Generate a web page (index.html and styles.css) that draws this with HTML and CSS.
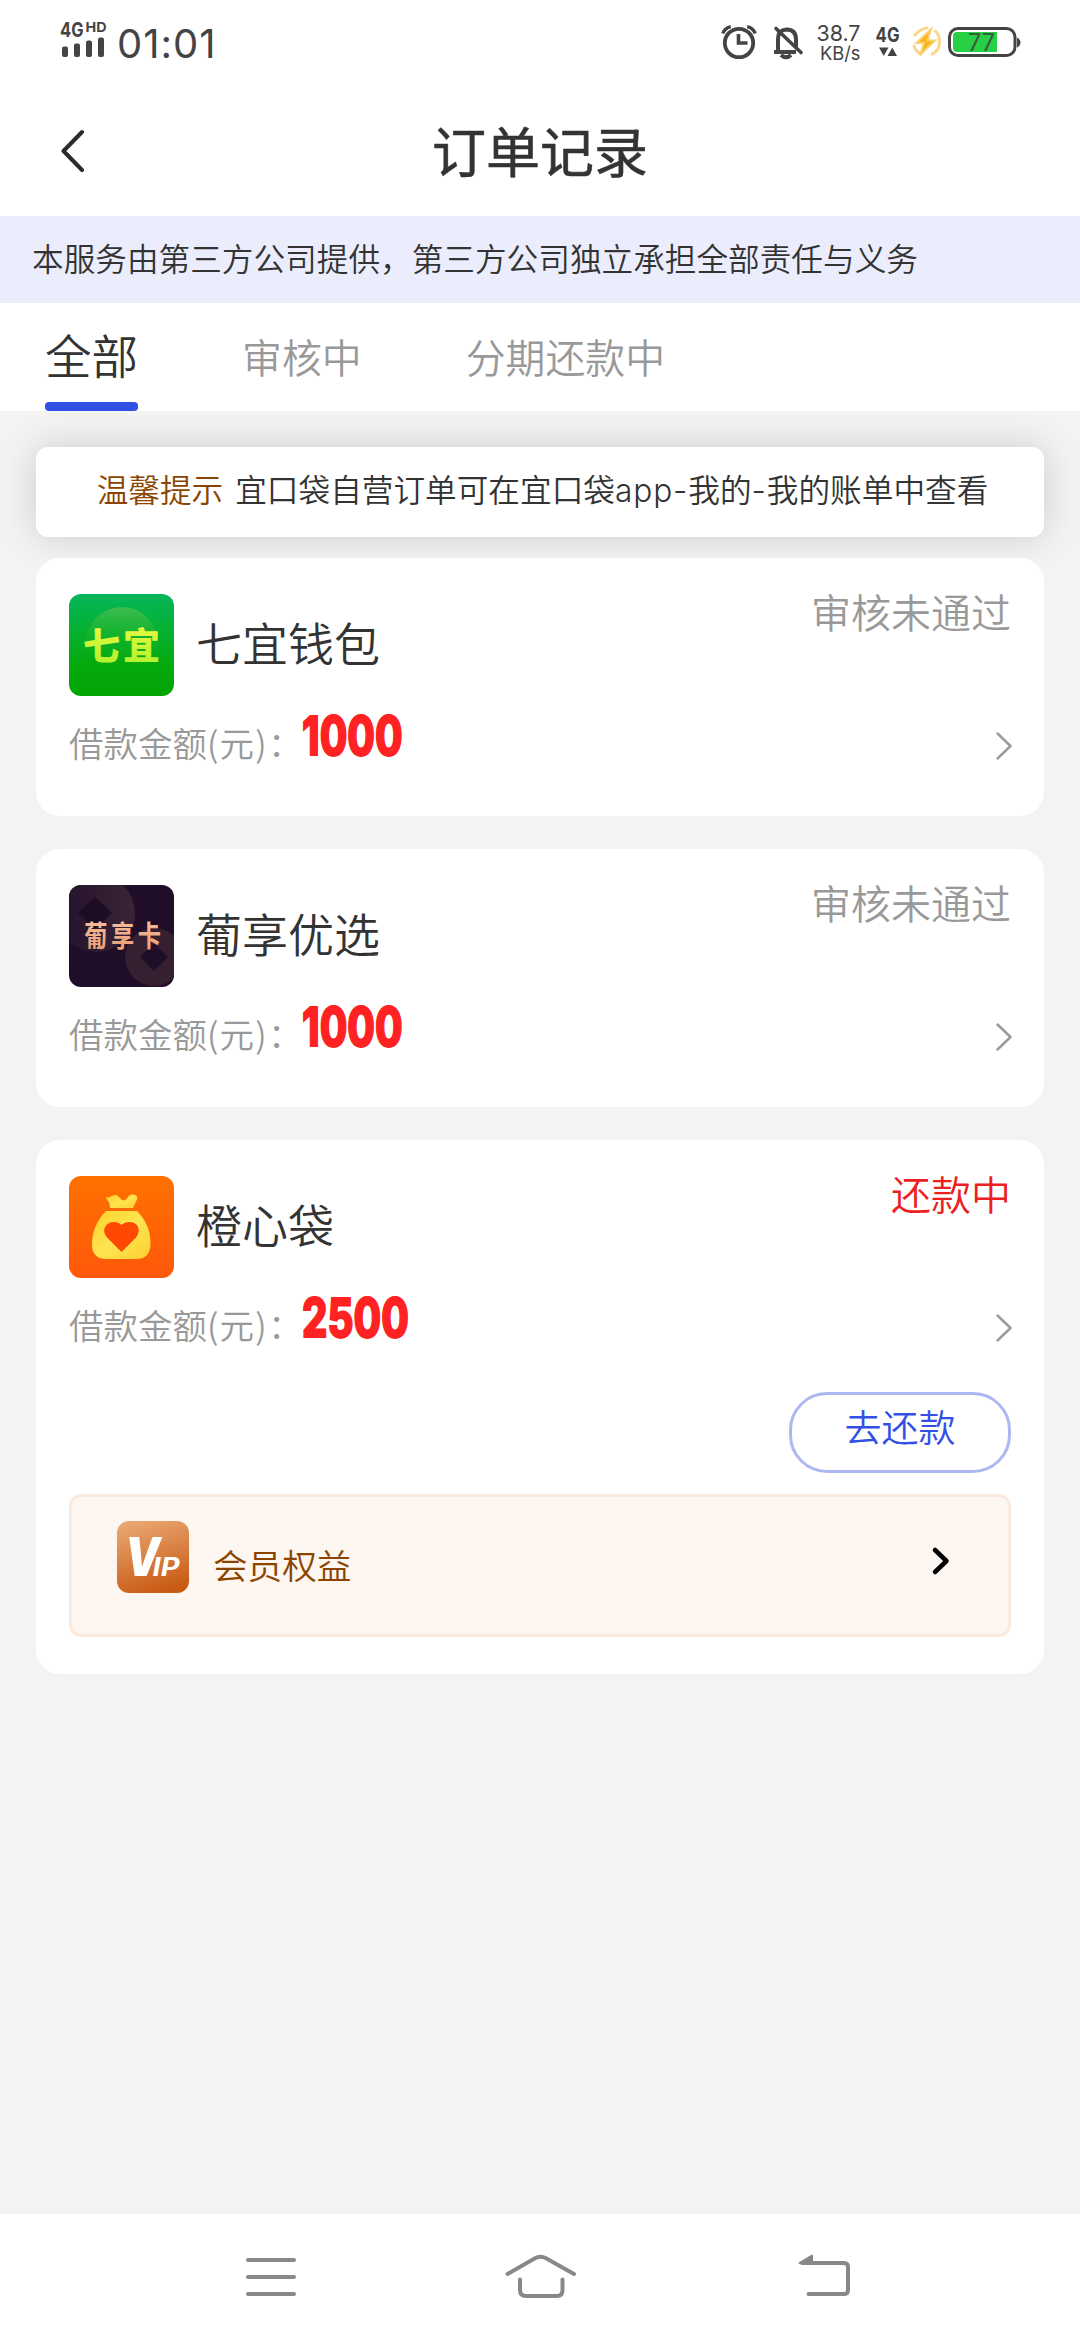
FILE: index.html
```html
<!DOCTYPE html>
<html lang="zh-CN">
<head>
<meta charset="utf-8">
<title>订单记录</title>
<link rel="stylesheet" href="styles.css">
</head>
<body>
<div class="screen">
  <div class="status">
    <svg class="status-signal" width="50" height="64" viewBox="58 0 50 64" fill="#444">
      <text class="heavy" x="60" y="37" font-size="20" textLength="23.500" lengthAdjust="spacingAndGlyphs">4G</text>
      <text class="heavy" x="85.500" y="32" font-size="13.500" textLength="21" lengthAdjust="spacingAndGlyphs">HD</text>
      <rect x="62" y="46.500" width="6" height="10.500" rx="2"/>
      <rect x="74" y="43.500" width="6" height="13.500" rx="2"/>
      <rect x="86" y="40.500" width="6" height="16.500" rx="2"/>
      <rect x="98" y="37.500" width="6" height="19.500" rx="2"/>
    </svg>
    <span class="time">01:01</span>
    <svg class="status-icons" width="310" height="80" viewBox="720 0 310 80" fill="none" stroke="#444">
      <circle cx="739" cy="43" r="14.200" stroke-width="3.800"/>
      <path d="M738.500 34v9h9" stroke-width="3.600"/>
      <path d="M722.800 33.500q2-5.500 8-6.800M755.200 33.500q-2-5.500-8-6.800" stroke-width="3.400"/>
      <path d="M774 52h22M778 51V39q0-9 8.500-9.500 9.500 0 9.500 10v8M781 55q5 4.500 10 0" stroke-width="4"/>
      <path d="M776 28.500l25 24" stroke-width="3.600" stroke-linecap="round"/>
      <g fill="#444" stroke="none">
        <text x="816.500" y="41" font-size="21.500" textLength="44" lengthAdjust="spacingAndGlyphs">38.7</text>
        <text x="820" y="60" font-size="19" textLength="40.500" lengthAdjust="spacingAndGlyphs">KB/s</text>
        <text class="heavy" x="875.500" y="41.500" font-size="20.500" textLength="24" lengthAdjust="spacingAndGlyphs">4G</text>
        <path d="M879 47.500h9.500l-4.800 8.500zM887.500 56h9.500l-4.700-8.500z"/>
      </g>
      <path d="M915 35q5-6 12-7M914 46q2 6 7 8M932 54q8-4 7.500-12 0-7-4-11" stroke="#fbd78c" stroke-width="3" stroke-linecap="round"/>
      <path d="M931 29l-14.500 14h7.500l-4 12 15-14.500h-7.500z" fill="#fbb413" stroke="#fbd070" stroke-width="2"/>
      <rect x="949.500" y="28.500" width="65.500" height="27" rx="8.500" stroke-width="3"/>
      <path d="M1017 37.500q3.500 2 3.500 5t-3.500 5z" fill="#444" stroke="none"/>
      <path d="M957 32h40v20h-40q-4 0-4-4V36q0-4 4-4z" fill="#27d045" stroke="none"/>
      <text x="968" y="51" font-size="24" fill="#3b5b40" stroke="none" textLength="27" lengthAdjust="spacingAndGlyphs">77</text>
    </svg>
  </div>
  <div class="header">
    <svg class="back" width="24" height="44" viewBox="0 0 24 44" fill="none" stroke="#2b2b2b" stroke-width="4" stroke-linecap="round" stroke-linejoin="round"><path d="M21 3L2.500 22 21 41"/></svg>
    <h1 class="title">订单记录</h1>
  </div>
  <div class="notice">本服务由第三方公司提供，第三方公司独立承担全部责任与义务</div>
  <div class="tabs">
    <div class="tab tab-active">全部</div>
    <div class="tab">审核中</div>
    <div class="tab">分期还款中</div>
  </div>
  <div class="content">
    <div class="tip"><span class="tip-label">温馨提示</span><span class="tip-text">宜口袋自营订单可在宜口袋<span class="latin">app-</span>我的<span class="latin">-</span>我的账单中查看</span></div>

    <div class="card">
      <div class="card-head">
        <svg class="logo" viewBox="0 0 105 102">
          <defs>
            <linearGradient id="green" x1="0" y1="0" x2="0" y2="1"><stop offset="0" stop-color="#06b65b"/><stop offset=".7" stop-color="#05aa0b"/><stop offset="1" stop-color="#04a304"/></linearGradient>
            <linearGradient id="disc" x1="0" y1="0" x2="0" y2="1"><stop offset="0" stop-color="#3dbd50"/><stop offset=".8" stop-color="#08ac0c" stop-opacity="0"/></linearGradient>
            <linearGradient id="lime" x1="0" y1="0" x2="0" y2="1"><stop offset="0" stop-color="#f6fb45"/><stop offset="1" stop-color="#a8f02a"/></linearGradient>
          </defs>
          <rect width="105" height="102" fill="url(#green)"/>
          <circle cx="53" cy="49" r="36" fill="url(#disc)"/>
          <text class="brand" x="14" y="66" font-size="37" fill="url(#lime)" textLength="77">七宜</text>
        </svg>
        <div class="name">七宜钱包</div>
        <div class="state">审核未通过</div>
      </div>
      <div class="amount-row">
        <span class="label">借款金额<span class="unit">(元)</span>：</span><span class="amount">1000</span>
        <svg class="arrow" width="18" height="30" viewBox="0 0 18 30"><path d="M2.500 2.500L15.500 15l-13 12.500"/></svg>
      </div>
    </div>

    <div class="card">
      <div class="card-head">
        <svg class="logo" viewBox="0 0 105 102">
          <defs>
            <linearGradient id="plum" x1="0" y1="0" x2="1" y2="0"><stop offset="0" stop-color="#24122d"/><stop offset="1" stop-color="#382434"/></linearGradient>
            <linearGradient id="peach" x1="0" y1="0" x2="0" y2="1"><stop offset="0" stop-color="#f9c3a2"/><stop offset="1" stop-color="#e8996e"/></linearGradient>
          </defs>
          <rect width="105" height="102" fill="#200e29"/>
          <circle cx="27" cy="28" r="39" fill="url(#plum)"/>
          <path d="M26 12l17 16-17 16L9 28z" fill="#1c0c24"/>
          <circle cx="85" cy="72" r="29" fill="#342030"/>
          <path d="M85 58l14 14-14 14-14-14z" fill="#1f0e27"/>
          <text class="brand-medium" transform="scale(.8 1)" x="19" y="62" font-size="29" fill="url(#peach)" letter-spacing="4.500">葡享卡</text>
        </svg>
        <div class="name">葡享优选</div>
        <div class="state">审核未通过</div>
      </div>
      <div class="amount-row">
        <span class="label">借款金额<span class="unit">(元)</span>：</span><span class="amount">1000</span>
        <svg class="arrow" width="18" height="30" viewBox="0 0 18 30"><path d="M2.500 2.500L15.500 15l-13 12.500"/></svg>
      </div>
    </div>

    <div class="card card-last">
      <div class="card-head">
        <svg class="logo" viewBox="0 0 105 102">
          <defs>
            <linearGradient id="orange" x1="0" y1="0" x2="0" y2="1"><stop offset="0" stop-color="#ff7100"/><stop offset="1" stop-color="#ff580b"/></linearGradient>
            <linearGradient id="gold" x1="0" y1="0" x2="1" y2="1"><stop offset="0" stop-color="#fbd427"/><stop offset=".5" stop-color="#fee451"/><stop offset="1" stop-color="#fcd02f"/></linearGradient>
          </defs>
          <rect width="105" height="102" fill="url(#orange)"/>
          <path d="M36.500 21.500q3 .5 6-1.500 5-2.500 8 1.500 4 5.500 8 .5 1-3 4.500-3.500 4.500-.5 5.500 3.500-.5 2-2 4.500l-2.500 5.500H41q0-3.500-1-5.500-1.500-2.500-3.500-5z" fill="url(#gold)"/>
          <path d="M37 35h31q14 14 13.500 34-1 14-14 14h-30q-13.500 0-14.500-13Q22.500 50 37 35z" fill="url(#gold)"/>
          <path d="M52.500 76L38 61.500q-4.500-6-2-10.500 3-5 8.500-5 5 0 8 3 3-3 8-3 6 0 8.500 5 2 5-2 10.500z" fill="#ff4802"/>
        </svg>
        <div class="name">橙心袋</div>
        <div class="state state-active">还款中</div>
      </div>
      <div class="amount-row">
        <span class="label">借款金额<span class="unit">(元)</span>：</span><span class="amount">2500</span>
        <svg class="arrow" width="18" height="30" viewBox="0 0 18 30"><path d="M2.500 2.500L15.500 15l-13 12.500"/></svg>
      </div>
      <div class="actions"><div class="repay">去还款</div></div>
      <div class="vip">
        <svg class="vip-logo" width="72" height="72" viewBox="0 0 72 72">
          <defs><linearGradient id="bronze" x1=".3" y1="0" x2=".6" y2="1"><stop offset="0" stop-color="#e9a570"/><stop offset="1" stop-color="#c85a12"/></linearGradient></defs>
          <rect width="72" height="72" rx="12" fill="url(#bronze)"/>
          <g class="vip-mark">
            <text class="vip-v" x="8" y="55" font-size="53" textLength="35" lengthAdjust="spacingAndGlyphs">V</text>
            <text x="35.500" y="55" font-size="25" textLength="27" lengthAdjust="spacingAndGlyphs">IP</text>
          </g>
        </svg>
        <span class="vip-text">会员权益</span>
        <svg class="vip-arrow" width="20" height="30" viewBox="0 0 20 30"><path d="M4 4l11.500 11L4 26"/></svg>
      </div>
    </div>
  </div>
  <div class="navbar">
    <svg width="50" height="60" viewBox="0 0 50 60"><path d="M2 16h46M2 33h46M2 50h46"/></svg>
    <svg class="nav-home" width="80" height="60" viewBox="0 0 80 60"><path d="M6.500 30L34 14.200q5.500-3 11 0L73 30M19 35.500V46q0 6 6 6h31q5.500 0 5.500-6V35.500"/></svg>
    <svg class="nav-back" width="56" height="60" viewBox="0 0 56 60"><path d="M4 19h42q4 0 4 4v23q0 4-4 4H10.500"/><path class="nav-tip" d="M1.500 19L14 11.500V19z"/></svg>
  </div>
</div>
</body>
</html>
```
FILE: styles.css
```css
* { box-sizing: border-box; }

body {
  margin: 0;
  font-family: "Noto Sans CJK SC", "Noto Sans", sans-serif;
  font-weight: 350;
  color: #333;
}

svg { display: block; flex: none; }
svg text { font-family: Inter, Roboto, sans-serif; font-weight: 400; }
svg text.heavy { font-weight: 700; }
svg text.brand { font-family: "Noto Sans CJK SC", sans-serif; font-weight: 900; }
svg text.brand-medium { font-family: "Noto Sans CJK SC", sans-serif; font-weight: 700; }

.screen {
  width: 1080px;
  height: 2340px;
  display: flex;
  flex-direction: column;
  background: #f3f3f3;
  overflow: hidden;
}

.status {
  height: 84px;
  flex: none;
  display: flex;
  align-items: flex-start;
  padding: 0 50px 0 58px;
  background: #fff;
}
.time {
  margin-left: 9px;
  padding-top: 20px;
  font: 400 40px/48px Inter, Roboto, sans-serif;
  letter-spacing: 1px;
  color: #444;
}
.status-icons { margin-left: auto; }

.header {
  height: 132px;
  flex: none;
  display: grid;
  grid-template-columns: 108px 1fr 108px;
  align-items: center;
  background: #fff;
}
.back { margin: 1px 0 0 61px; }
.title {
  margin: 0;
  text-align: center;
  font-size: 54px;
  line-height: 80px;
  font-weight: 400;
  -webkit-text-stroke: .6px #333;
}

.notice {
  height: 87px;
  flex: none;
  padding-left: 32px;
  background: #ebedfd;
  font-size: 31.65px;
  line-height: 83px;
  white-space: nowrap;
}

.tabs {
  height: 108px;
  flex: none;
  display: flex;
  gap: 104px;
  padding-left: 45px;
  background: #fff;
}
.tab {
  font-size: 39.9px;
  line-height: 106px;
  color: #999;
}
.tab-active {
  width: 93px;
  height: 108px;
  display: flex;
  flex-direction: column;
  font-size: 46.5px;
  line-height: 101px;
  color: #333;
}
.tab-active::after {
  content: "";
  width: 93px;
  height: 9px;
  margin-top: -2px;
  flex: none;
  border-radius: 4px;
  background: #3350e6;
}

.content {
  flex: 1;
  padding: 36px 36px 0;
}
.tip {
  height: 90px;
  display: flex;
  justify-content: center;
  gap: 12px;
  padding-left: 5px;
  border-radius: 12px;
  background: #fff;
  box-shadow: 0 0 36px rgba(0, 0, 0, .16);
  font-size: 31.65px;
  line-height: 83px;
  white-space: nowrap;
}
.tip-label { color: #8b4500; }
.latin { font-family: Inter, sans-serif; font-weight: 300; letter-spacing: .9px; }

.card {
  height: 258px;
  margin-top: 33px;
  padding: 36px 33px 0;
  border-radius: 24px;
  background: #fff;
}
.tip + .card { margin-top: 21px; position: relative; }
.card-last { height: 534px; }
.card-head { display: flex; height: 102px; }
.logo {
  width: 105px;
  height: 102px;
  border-radius: 12px;
}
.name {
  margin-left: 22px;
  font-size: 46px;
  line-height: 94px;
}
.state {
  margin-left: auto;
  font-size: 40px;
  line-height: 34px;
  color: #999;
}
.state-active { color: #ec2020; }

.amount-row {
  height: 96px;
  display: flex;
  align-items: center;
}
.label {
  width: 233px;
  flex: none;
  font-size: 34.5px;
  line-height: 92px;
  margin-top: -4px;
  white-space: nowrap;
  color: #999;
}
.unit { letter-spacing: 1.2px; }
.amount {
  font: 800 54px/60px Inter, sans-serif;
  color: #ff2222;
  -webkit-text-stroke: 1.8px #ff2222;
  transform: scaleX(.74);
  transform-origin: left center;
  margin-top: -16px;
}
.arrow { margin: 4px -2px 0 auto; }
.arrow path { fill: none; stroke: #9b9b9b; stroke-width: 2.5px; stroke-linecap: round; stroke-linejoin: round; }

.actions {
  display: flex;
  justify-content: flex-end;
  margin-top: 18px;
}
.repay {
  width: 222px;
  height: 81px;
  border: 3px solid #adb8f1;
  border-radius: 38px;
  text-align: center;
  font-size: 37px;
  line-height: 63px;
  color: #3350e6;
}
.vip {
  height: 143px;
  display: flex;
  margin-top: 21px;
  padding: 24px 57px 0 45px;
  border: 3px solid #fbeade;
  border-radius: 12px;
  background: #fef6f0;
}
.vip-mark text {
  fill: #fff;
  font-weight: 700;
  font-style: italic;
}
.vip-mark .vip-v { font-weight: 900; }
.vip-text {
  margin-left: 24px;
  font-size: 34.6px;
  line-height: 86px;
  color: #8b4500;
}
.vip-arrow { margin: 25px 0 0 auto; }
.vip-arrow path { fill: none; stroke: #000; stroke-width: 4.5px; stroke-linecap: round; stroke-linejoin: round; }

.navbar {
  height: 126px;
  flex: none;
  display: flex;
  padding: 30px 0 0 246px;
  background: #fff;
}
.nav-home { margin-left: 205px; }
.nav-back { margin-left: 217px; }
.navbar path { fill: none; stroke: #888; stroke-width: 4px; stroke-linecap: round; stroke-linejoin: round; }
.navbar .nav-tip { fill: #888; stroke-width: 2px; }
```
